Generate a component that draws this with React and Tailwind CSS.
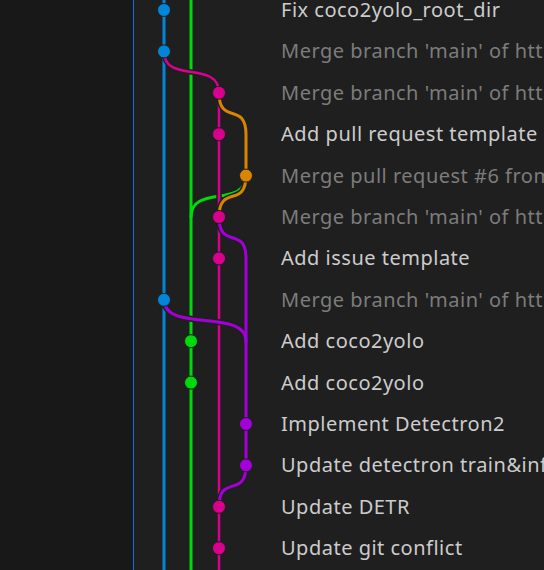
const ROW = 41.4;
const Y = (i) => 10 + ROW * i;
const LANE = [164, 191, 219, 246];

const COLORS = {
  blue: "#0085d9",
  magenta: "#d9008f",
  green: "#00d90a",
  orange: "#d98500",
  purple: "#a300d9",
};

// bezier from (lane a, row i) to (lane b, row i+1)
const curve = (a, i, b) => {
  const d = ROW * 0.8;
  const y1 = Y(i);
  const y2 = Y(i + 1);
  return `C${LANE[a]} ${y1 + d} ${LANE[b]} ${y2 - d} ${LANE[b]} ${y2}`;
};

const branches = [
  { color: COLORS.blue, width: 3, paths: [`M${LANE[0]} 0 V570`] },
  {
    color: COLORS.green,
    width: 3,
    paths: [`M${LANE[1]} 0 V570`, `M${LANE[3]} ${Y(4)} ${curve(3, 4, 1)}`],
  },
  {
    color: COLORS.magenta,
    width: 2.5,
    paths: [`M${LANE[0]} ${Y(1)} ${curve(0, 1, 2)} V570`],
  },
  {
    color: COLORS.orange,
    width: 3,
    paths: [`M${LANE[2]} ${Y(2)} ${curve(2, 2, 3)} V${Y(4)} ${curve(3, 4, 2)}`],
  },
  {
    color: COLORS.purple,
    width: 3,
    paths: [
      `M${LANE[2]} ${Y(5)} ${curve(2, 5, 3)} V${Y(11)} ${curve(3, 11, 2)}`,
      `M${LANE[0]} ${Y(7)} ${curve(0, 7, 3)}`,
    ],
  },
];

const commits = [
  { lane: 0, color: COLORS.blue, text: "Fix coco2yolo_root_dir" },
  { lane: 0, color: COLORS.blue, text: "Merge branch 'main' of https://github.com/lab/models", merge: true },
  { lane: 2, color: COLORS.magenta, text: "Merge branch 'main' of https://github.com/lab/models", merge: true },
  { lane: 2, color: COLORS.magenta, text: "Add pull request template" },
  { lane: 3, color: COLORS.orange, text: "Merge pull request #6 from lab/dev", merge: true },
  { lane: 2, color: COLORS.magenta, text: "Merge branch 'main' of https://github.com/lab/models", merge: true },
  { lane: 2, color: COLORS.magenta, text: "Add issue template" },
  { lane: 0, color: COLORS.blue, text: "Merge branch 'main' of https://github.com/lab/models", merge: true },
  { lane: 1, color: COLORS.green, text: "Add coco2yolo" },
  { lane: 1, color: COLORS.green, text: "Add coco2yolo" },
  { lane: 3, color: COLORS.purple, text: "Implement Detectron2" },
  { lane: 3, color: COLORS.purple, text: "Update detectron train&inference" },
  { lane: 2, color: COLORS.magenta, text: "Update DETR" },
  { lane: 2, color: COLORS.magenta, text: "Update git conflict" },
];

const Graph = () => (
  <svg width="147" height="570" viewBox="134 0 147 570" className="shrink-0 block">
    {branches.map((b, i) => (
      <g key={i} fill="none" strokeLinecap="round">
        {b.paths.map((d, j) => (
          <path key={"s" + j} d={d} stroke="#1f1f1f" strokeWidth={b.width + 3} />
        ))}
        {b.paths.map((d, j) => (
          <path key={"l" + j} d={d} stroke={b.color} strokeWidth={b.width} />
        ))}
      </g>
    ))}
    {commits.map((c, i) => (
      <circle key={i} cx={LANE[c.lane]} cy={Y(i)} r="6.5" fill={c.color} stroke="#1f1f1f" strokeWidth="1" />
    ))}
  </svg>
);

export default function App() {
  return (
    <div className="flex w-[544px] h-[570px] overflow-hidden bg-[#1f1f1f]" style={{ fontFamily: '"Noto Sans", "Open Sans", sans-serif' }}>
      <div className="w-[134px] shrink-0 bg-[#181818] border-r border-[#0078d4]" />
      <Graph />
      <div className="flex-1 min-w-0 flex flex-col mt-[-10.7px]">
        {commits.map((c, i) => (
          <div
            key={i}
            className={`h-[41.4px] shrink-0 flex items-center whitespace-nowrap overflow-hidden text-[20px] tracking-[0.5px] ${c.merge ? "text-[#7c7c7c]" : "text-[#cccccc]"}`}
          >
            {c.text}
          </div>
        ))}
      </div>
    </div>
  );
}
